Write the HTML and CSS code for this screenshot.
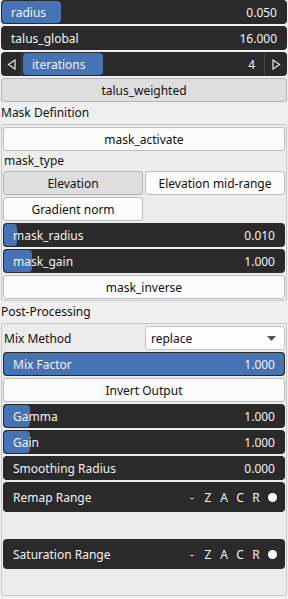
FILE: index.html
```html
<!DOCTYPE html>
<html lang="en">
<head>
    <meta charset="UTF-8">
    <meta name="viewport" content="width=device-width, initial-scale=1.0">
    <title>Erosion</title>
    <link rel="stylesheet" href="styles.css">
</head>
<body>
    <div class="panel">
        <div class="slider">
            <div class="fill" style="width: 59px"></div>
            <span class="label">radius</span>
            <span class="value">0.050</span>
        </div>
        <div class="slider">
            <span class="label">talus_global</span>
            <span class="value">16.000</span>
        </div>
        <div class="slider int-slider">
            <span class="arrow">
                <svg width="9" height="11" viewBox="0 0 9 11"><path d="M8 1 L1.5 5.5 L8 10 Z" fill="none" stroke="#e8e8e8" stroke-width="1.2"/></svg>
            </span>
            <div class="int-track">
                <div class="fill" style="width: 80px"></div>
                <span class="label">iterations</span>
                <span class="value">4</span>
            </div>
            <span class="arrow">
                <svg width="9" height="11" viewBox="0 0 9 11"><path d="M1 1 L7.5 5.5 L1 10 Z" fill="none" stroke="#e8e8e8" stroke-width="1.2"/></svg>
            </span>
        </div>
        <button class="btn pressed">talus_weighted</button>

        <div class="section-title">Mask Definition</div>
        <div class="group">
            <button class="btn">mask_activate</button>
            <div class="field-label">mask_type</div>
            <div class="choices">
                <button class="btn pressed">Elevation</button>
                <button class="btn">Elevation mid-range</button>
                <button class="btn">Gradient norm</button>
            </div>
            <div class="slider">
                <div class="fill" style="width: 13px"></div>
                <span class="label">mask_radius</span>
                <span class="value">0.010</span>
            </div>
            <div class="slider">
                <div class="fill" style="width: 28px"></div>
                <span class="label">mask_gain</span>
                <span class="value">1.000</span>
            </div>
            <button class="btn">mask_inverse</button>
        </div>

        <div class="section-title">Post-Processing</div>
        <div class="group">
            <div class="combo-row">
                <span class="combo-label">Mix Method</span>
                <div class="combo">
                    <span>replace</span>
                    <svg width="9" height="5" viewBox="0 0 9 5"><path d="M0 0 L9 0 L4.5 5 Z" fill="#555"/></svg>
                </div>
            </div>
            <div class="slider full">
                <div class="fill"></div>
                <span class="label">Mix Factor</span>
                <span class="value">1.000</span>
            </div>
            <button class="btn">Invert Output</button>
            <div class="slider">
                <div class="fill" style="width: 26px"></div>
                <span class="label">Gamma</span>
                <span class="value">1.000</span>
            </div>
            <div class="slider">
                <div class="fill" style="width: 26px"></div>
                <span class="label">Gain</span>
                <span class="value">1.000</span>
            </div>
            <div class="slider">
                <span class="label">Smoothing Radius</span>
                <span class="value">0.000</span>
            </div>
            <div class="range">
                <div class="range-bar">
                    <span class="label">Remap Range</span>
                    <span class="flags"><span>-</span><span>Z</span><span>A</span><span>C</span><span>R</span><span class="dot"></span></span>
                </div>
            </div>
            <div class="range">
                <div class="range-bar">
                    <span class="label">Saturation Range</span>
                    <span class="flags"><span>-</span><span>Z</span><span>A</span><span>C</span><span>R</span><span class="dot"></span></span>
                </div>
            </div>
        </div>
    </div>
</body>
</html>
```

FILE: styles.css
```css
body {
    margin: 0;
    background-color: #efefef;
    font-family: "Noto Sans", sans-serif;
    font-size: 12px;
    color: #111;
}
.panel {
    display: flex;
    flex-direction: column;
    gap: 2px;
    padding: 0 1px;
}
/* Sliders */
.slider {
    position: relative;
    height: 24px;
    background-color: #2a2a2a;
    border-radius: 4px;
    display: flex;
    align-items: center;
    justify-content: space-between;
    padding: 0 10px;
    color: #f2f2f2;
    overflow: hidden;
}
.slider .fill {
    position: absolute;
    left: 1px;
    top: 1px;
    bottom: 1px;
    background-color: #4772b3;
    border-radius: 4px;
}
.slider.full .fill {
    right: 1px;
}
.slider .label, .slider .value {
    position: relative;
}
.int-slider {
    padding: 0;
}
.int-slider .arrow {
    width: 20px;
    height: 100%;
    display: flex;
    align-items: center;
    justify-content: center;
}
.int-slider .arrow:first-child {
    border-right: 1px solid #444;
}
.int-slider .arrow:last-child {
    width: 22px;
    border-left: 1px solid #444;
}
.int-track {
    position: relative;
    flex: 1;
    height: 100%;
    display: flex;
    align-items: center;
    justify-content: space-between;
    padding: 0 9px 0 10px;
}
/* Buttons */
.btn {
    height: 24px;
    font-family: inherit;
    font-size: 12px;
    color: #111;
    background-color: #fbfbfb;
    border: 1px solid #bdbdbd;
    border-radius: 3px;
    padding: 0;
}
.btn.pressed {
    background-color: #dedede;
    border-color: #b4b4b4;
}
.section-title {
    height: 18px;
    line-height: 18px;
}
.group {
    display: flex;
    flex-direction: column;
    gap: 2px;
    padding: 2px 1px 1px;
    border: 1px solid #c8c8c8;
    border-radius: 2px;
    background-color: #ececec;
}
.field-label {
    height: 16px;
    line-height: 16px;
    padding-left: 1px;
}
.choices {
    display: grid;
    grid-template-columns: 1fr 1fr;
    gap: 2px;
}
/* Combo */
.combo-row {
    display: grid;
    grid-template-columns: 1fr 1fr;
    gap: 2px;
    align-items: center;
}
.combo-label {
    padding-left: 1px;
}
.combo {
    height: 22px;
    background-color: #fdfdfd;
    border: 1px solid #c4c4c4;
    border-radius: 3px;
    display: flex;
    align-items: center;
    justify-content: space-between;
    padding: 0 8px 0 5px;
}
/* Range */
.range {
    height: 55px;
}
.range-bar {
    height: 30px;
    background-color: #2a2a2a;
    border-radius: 4px;
    display: flex;
    align-items: center;
    justify-content: space-between;
    padding: 0 8px 0 10px;
    color: #f2f2f2;
}
.flags {
    display: flex;
    align-items: center;
    gap: 8px;
}
.flags span {
    width: 8px;
    text-align: center;
}
.flags .dot {
    width: 9px;
    height: 9px;
    border-radius: 50%;
    background-color: #fff;
}
```
